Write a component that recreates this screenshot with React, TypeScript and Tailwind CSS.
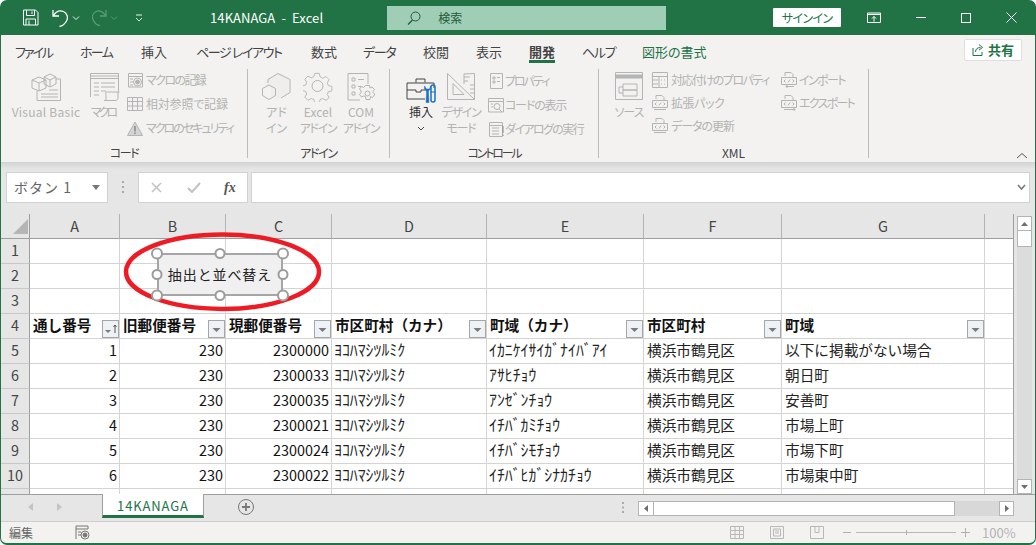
import React from "react";

const G = "#b4b4b4";
const ui = "font-['Noto_Sans_CJK_JP',sans-serif] [font-feature-settings:'palt']";

function Ic({ w, h, children, className = "" }: { w: number; h: number; children: React.ReactNode; className?: string }) {
  return (
    <svg width={w} height={h} viewBox={`0 0 ${w} ${h}`} fill="none" stroke={G} strokeWidth="1" className={`shrink-0 ${className}`}>
      {children}
    </svg>
  );
}

const VB = () => (
  <Ic w={31} h={30}>
    <path d="M1 8l7-3 7 3v8l-7 3-7-3zM1 8l7 3 7-3M8 11v8" />
    <path d="M13 5l6-3 6 3v7l-6 3-6-3zM13 5l6 3 6-3M19 8v7" />
    <path d="M25 7h4.500v21.500H6V19M10 22h17M10 25h17M18 18h9" />
  </Ic>
);
const Macro = () => (
  <Ic w={31} h={30} className="ml-[3px]">
    <path d="M1.500 25V1.500h28V19M1.500 6.500h28M1.500 1.500h28V4h-28z" />
    <path d="M5 11h5M12 11h14M5 15h5M12 15h14M5 19h5M12 19h5M5 23h5" />
    <path d="M17 28.500h9c2 0 3-1 3-3V20h1.500M17 20h13M17 20c-1 1 0 2 0 3v4c0 1-1 1.500-2 1.500h2" />
  </Ic>
);
const RecIc = () => (
  <Ic w={16} h={16}>
    <path d="M1.500 15V1.500h14V15zM1.500 4.500h14M3 7h3M3 10h3M3 13h3" />
    <circle cx="10.500" cy="10" r="4" fill="#f3f2f1" />
    <circle cx="10.500" cy="10" r="2" fill={G} />
  </Ic>
);
const GridIc = () => (
  <Ic w={16} h={14}>
    <path d="M.5.500h15v13H.5zM5.500.500v13M10.500.500v13M.5 4.500h15M.5 9h15" />
  </Ic>
);
const WarnIc = () => (
  <Ic w={16} h={15}>
    <path d="M8 1l7.500 13.500H.5z" fill="#d4d4d4" />
    <path d="M8 5v5.500M8 11.500v1.500" stroke="#888" strokeWidth="1.500" />
  </Ic>
);
const Hex = () => (
  <Ic w={29} h={30}>
    <path d="M15 1l11.500 6.500v13L15 27 9 24V16l-6-2V7.500z" fill="#efeeed" stroke="none" />
    <path d="M6 11V7.500L16 1.500l12 6v13L19 26" />
    <path d="M7 13l6.500 3.500v7L7 27.500.5 23.500v-7z" />
  </Ic>
);
const Gear = () => (
  <Ic w={30} h={30}>
    <path d="M12.500 1.500h5l1 4 3 1.500 3.500-2 3.500 3.500-2 3.500 1 3 4 1v5l-4 1-1 3 2 3.500-3.500 3-3.500-2-3 1-1 4h-5l-1-4-3-1-3.500 2-3.500-3.500 2-3.500-1-3-4-1v-5l4-1 1-3-2-3.500 3.500-3.500 3.500 2 3-1.500z" transform="translate(0.500 0) scale(.9)" />
    <circle cx="14.500" cy="14" r="5.500" />
  </Ic>
);
const Com = () => (
  <Ic w={28} h={30}>
    <path d="M21 12V1.500H1V28h12" />
    <path d="M5 6h3v3H5zM5 13h3v3H5zM5 20h3v3H5zM11 7.500h6M11 14.500h3" />
    <circle cx="20.500" cy="21.500" r="2.500" />
    <path d="M18.500 13.500h4l.5 2.500 2-1 2.500 2.500-1.500 2 0 1 1.500 1.500v1l-2 2.500-2-1-.5 3h-4l-.5-3-2-.5-2 1-2-2.500 1.500-2v-1.500l-1.500-2 2-2.500 2 1z" />
  </Ic>
);
const Toolbox = () => (
  <svg width="31" height="28" viewBox="0 0 31 28" fill="none" className="shrink-0">
    <path d="M1 23V7h27v5M1 23h18M1 14h9v2h5v-2h5M10 6.500V3h9v3.500" stroke="#444" />
    <path d="M19 10v3l2 2v3l-.5 8.500h3L23 18v-3l2-2v-3l-1 3h-3z" fill="#1b70c4" stroke="#1b70c4" strokeWidth=".5" transform="translate(-.5 0)" />
    <path d="M27 9c1 0 2 1 2 2v13c0 1-1 2-2 2s-2-1-2-2V11c0-1 1-2 2-2z" stroke="#1b70c4" strokeWidth="1.500" />
    <path d="M24.500 16h5" stroke="#1b70c4" />
  </svg>
);
const Ruler = () => (
  <Ic w={30} h={30}>
    <path d="M1.500 1.500v26h27zM7 11.500v11h11z" />
    <path d="M18 12V2l10.500-.5V27M18 5h6M18 9h4M24 13h4M24 17h4M24 21h4" />
  </Ic>
);
const Prop = () => (
  <Ic w={13} h={16}>
    <path d="M.5.500h12v15H.5zM3 4h2v2H3zM3 8h2v2H3zM7 4.500h3M7 8.500h3" />
  </Ic>
);
const Code = () => (
  <Ic w={16} h={15}>
    <path d="M.5 14V.5h15V14zM.5 3.500h15" />
    <circle cx="9" cy="8.500" r="3" />
    <path d="M11 11l3 3M3 6h2M3 9h2" />
  </Ic>
);
const Dlg = () => (
  <Ic w={15} h={15}>
    <path d="M.5.500h13v14H.5zM.5 3.500h13M3 6h7M3 9h7M3 12h7" />
    <path d="M14 4v7M14 12.500v1.500" stroke="#888" />
  </Ic>
);
const Source = () => (
  <Ic w={29} h={29}>
    <path d="M.5.500h27v27H.5z" />
    <path d="M1 4.500h26" strokeWidth="4" />
    <path d="M8 12h14v6H8zM8 18h14v6H8zM4 15h4M4 15v6h4" />
  </Ic>
);
const MapIc = () => (
  <Ic w={16} h={16}>
    <path d="M.5.500h15v15H.5zM.5 4.500h15M7 4.500v11M.5 8h6M.5 12h6M9 8h1M12 8h1M9 12h1M12 12h1" />
  </Ic>
);
const Xml = ({ arrow = "" }: { arrow?: string }) => (
  <Ic w={16} h={16}>
    <path d="M4 4V.5h6l2 2V5M.5 5.500h15v7H.5z" />
    <path d="M4.500 7.500L3 9l1.500 1.500M11.500 7.500L13 9l-1.500 1.500M7 10.500l2-3" />
    <path d={arrow || "M2 14.500h12"} />
  </Ic>
);

function Large({ cls, icon, lines }: { cls: string; icon: React.ReactNode; lines: [string, string][] }) {
  return (
    <div className={`flex flex-col items-center pt-[4px] shrink-0 ${cls}`}>
      <div className="h-[32px] flex items-start justify-center">{icon}</div>
      {lines.map(([l, c]) => (
        <div key={l} className={`h-[16px] leading-[16px] text-[12px] whitespace-nowrap text-[#b2b2b2] ${c}`}>{l}</div>
      ))}
    </div>
  );
}

function Small({ icon, label, tr, h = "h-[24px]", gap = "gap-[3px]" }: { icon: React.ReactNode; label: string; tr: string; h?: string; gap?: string }) {
  return (
    <div className={`flex items-center whitespace-nowrap text-[12px] text-[#b2b2b2] ${h} ${gap}`}>
      <div className="w-[16px] flex justify-center">{icon}</div>
      <span className={tr}>{label}</span>
    </div>
  );
}

function Group({ cls, label, tr = "", children }: { cls: string; label: string; tr?: string; children: React.ReactNode }) {
  return (
    <div className={`flex flex-col h-[93px] shrink-0 ${cls}`}>
      <div className="flex flex-1 min-h-0">{children}</div>
      <div className={`h-[16px] leading-[16px] text-center text-[12px] text-[#444444] ${tr}`}>{label}</div>
    </div>
  );
}
const Sep = () => <div className="w-px h-[89px] mt-px bg-[#bdbcbb] shrink-0" />;

const Tab = ({ children, cls }: { children: React.ReactNode; cls: string }) => (
  <div className={`text-[13px] leading-[33px] whitespace-nowrap text-[#444444] ${cls}`}>{children}</div>
);

const hira = "font-['Noto_Sans_CJK_JP',sans-serif]";
const num = "font-['Noto_Sans_CJK_JP',sans-serif] text-[14.4px] text-[#111111] flex items-center justify-end pr-[2px] pb-[2px]";
const line = "border-r border-b border-[#d4d4d4]";

const rows = [
  ["5", "1", "230", "2300000", "ﾖｺﾊﾏｼﾂﾙﾐｸ", "ｲｶﾆｹｲｻｲｶﾞﾅｲﾊﾞｱｲ", "横浜市鶴見区", "以下に掲載がない場合"],
  ["6", "2", "230", "2300033", "ﾖｺﾊﾏｼﾂﾙﾐｸ", "ｱｻﾋﾁｮｳ", "横浜市鶴見区", "朝日町"],
  ["7", "3", "230", "2300035", "ﾖｺﾊﾏｼﾂﾙﾐｸ", "ｱﾝｾﾞﾝﾁｮｳ", "横浜市鶴見区", "安善町"],
  ["8", "4", "230", "2300021", "ﾖｺﾊﾏｼﾂﾙﾐｸ", "ｲﾁﾊﾞｶﾐﾁｮｳ", "横浜市鶴見区", "市場上町"],
  ["9", "5", "230", "2300024", "ﾖｺﾊﾏｼﾂﾙﾐｸ", "ｲﾁﾊﾞｼﾓﾁｮｳ", "横浜市鶴見区", "市場下町"],
  ["10", "6", "230", "2300022", "ﾖｺﾊﾏｼﾂﾙﾐｸ", "ｲﾁﾊﾞﾋｶﾞｼﾅｶﾁｮｳ", "横浜市鶴見区", "市場東中町"],
];

const heads = [
  { t: "通し番号", sort: true },
  { t: "旧郵便番号" },
  { t: "現郵便番号" },
  { t: "市区町村（カナ）" },
  { t: "町域（カナ）" },
  { t: "市区町村" },
  { t: "町域" },
];

const RowH = ({ n }: { n: string }) => (
  <div className={`${hira} bg-[#e6e6e6] border-r border-r-[#9e9e9e] border-b border-b-[#c8c8c8] text-[14.4px] text-[#444444] flex items-center justify-center pb-[2px]`}>{n}</div>
);

const Filter = ({ sort }: { sort?: boolean }) => (
  <div className="w-[17px] h-[18px] shrink-0 self-end border border-[#a6a6a6] bg-[#eef1f5] flex items-center justify-center">
    <svg width="15" height="14" viewBox="0 0 15 14">
      <path d={sort ? "M2 8h6l-3 3z" : "M3.500 6h8l-4 4z"} fill="#7a7a7a" />
      {sort && <path d="M12 11V3M10.500 5L12 3l1.500 2" stroke="#555" fill="none" />}
    </svg>
  </div>
);

export default function App() {
  return (
    <div className="w-[1036px] h-[545px] bg-white">
      <div className={`w-[1036px] h-[545px] overflow-hidden rounded-[7px] bg-[#217346] flex flex-col px-px pb-[2px] ${ui}`}>
        {/* title bar */}
        <div className="h-[35px] flex items-center shrink-0 text-white relative">
          <svg width="17" height="17" viewBox="0 0 17 17" fill="none" stroke="#fff" className="ml-[21px]">
            <path d="M1.500 1h12l2.500 2.500V16H1.500zM4.500 1v5.500h8V1M4 16v-6h9.500v6M10 2.500v2.500M7 11.500v4.500" />
          </svg>
          <svg width="18" height="19" viewBox="0 0 18 19" fill="none" stroke="#fff" strokeWidth="1.300" className="ml-[13px]">
            <path d="M1 2v6h6M1.500 7.500C4 3.500 8 2 11.500 3.500s5 6 3 9.500S10 18 7.500 18.500" />
          </svg>
          <svg width="8" height="6" viewBox="0 0 8 6" fill="none" stroke="#e8f2ec" className="ml-[2px]"><path d="M1 1.500l3 3 3-3" /></svg>
          <svg width="16" height="17" viewBox="0 0 16 17" fill="none" stroke="#5c9b78" strokeWidth="1.300" className="ml-[11px]">
            <path d="M15 1v6H9M14.500 6.500C12 2.500 8 1 5 2.500s-4.500 5-2.500 9 5 5 6.500 5" />
          </svg>
          <svg width="8" height="6" viewBox="0 0 8 6" fill="none" stroke="#5c9b78" className="ml-[3px]"><path d="M1 1.500l3 3 3-3" /></svg>
          <svg width="8" height="8" viewBox="0 0 8 8" fill="none" stroke="#e8f2ec" className="ml-[17px]"><path d="M1 1h6M1 4l3 3 3-3" /></svg>
          <div className="ml-[67px] text-[13px] tracking-[.1px] whitespace-pre">14KANAGA  -  Excel</div>
          <div className="ml-[64px] w-[279px] h-[24px] bg-[#a0cdb5] flex items-center text-[#1c5c3a] text-[12px]">
            <svg width="14" height="14" viewBox="0 0 14 14" fill="none" stroke="#1c5c3a" className="ml-[20px]">
              <circle cx="8.500" cy="5.500" r="4.500" /><path d="M5.500 9L1 13.500" strokeWidth="1.300" />
            </svg>
            <span className="ml-[17px]">検索</span>
          </div>
          <div className="ml-[107px] w-[68px] h-[19px] bg-white rounded-[1px] text-[#217346] text-[12px] tracking-[-.6px] leading-[19px] text-center">サインイン</div>
          <svg width="14" height="11" viewBox="0 0 14 11" fill="none" stroke="#fff" className="ml-[26px]">
            <path d="M.5 1h13v9.500H.5zM.5 2.500h13M7 9.500V4.500M5 6.500l2-2 2 2" />
          </svg>
          <div className="ml-[35px] w-[10px] h-px bg-white" />
          <div className="ml-[35px] w-[10px] h-[10px] border border-white" />
          <svg width="11" height="11" viewBox="0 0 11 11" stroke="#fff" className="ml-[35px]"><path d="M.5.500l10 10M10.500.500l-10 10" /></svg>
        </div>

        {/* ribbon */}
        <div className="bg-[#f3f2f1] shrink-0">
          <div className="h-[33px] flex relative">
            <Tab cls="ml-[14px] w-[37px] tracking-[-2px]">ファイル</Tab>
            <Tab cls="ml-[28px] w-[33px] tracking-[-1.7px]">ホーム</Tab>
            <Tab cls="ml-[28px] w-[25px]">挿入</Tab>
            <Tab cls="ml-[30px] w-[86px] tracking-[-1.4px]">ページ レイアウト</Tab>
            <Tab cls="ml-[29px] w-[26px]">数式</Tab>
            <Tab cls="ml-[26px] w-[32px] tracking-[-1.3px]">データ</Tab>
            <Tab cls="ml-[28px] w-[25px]">校閲</Tab>
            <Tab cls="ml-[28px] w-[26px]">表示</Tab>
            <div className="ml-[27px] w-[26px] relative">
              <div className="text-[13px] leading-[33px] font-bold text-[#444444] whitespace-nowrap">開発</div>
              <div className="absolute left-0 right-0 top-[25px] h-[3px] bg-[#217346]" />
            </div>
            <Tab cls="ml-[27px] w-[32px] tracking-[-1.3px]">ヘルプ</Tab>
            <Tab cls="ml-[28px] w-[63px] !text-[#217346]">図形の書式</Tab>
            <div className="ml-[259px] mt-[4px] w-[58px] h-[22px] shrink-0 bg-white border border-[#e1dfdd] rounded-[2px] flex items-center justify-center gap-[4px]">
              <svg width="12" height="12" viewBox="0 0 12 12" fill="none" stroke="#217346"><path d="M1 4v7.500h9V8M3.500 8c0-3 2-4.500 5-4.500M7 .5l3.500 3L7 6" /></svg>
              <span className="text-[13px] font-bold text-[#217346] whitespace-nowrap">共有</span>
            </div>
          </div>
          <div className="h-[94px] flex">
            <Group cls="w-[246px]" label="コード" tr="tracking-[-1.500px]">
              <Large cls="w-[70px] ml-[10px]" icon={<VB />} lines={[["Visual Basic", "tracking-[.25px]"]]} />
              <Large cls="w-[32px] ml-[6px]" icon={<Macro />} lines={[["マクロ", "tracking-[-3px]"]]} />
              <div className="ml-[8px] shrink-0">
                <Small icon={<RecIc />} label="マクロの記録" tr="tracking-[-1.600px]" />
                <Small icon={<GridIc />} label="相対参照で記録" tr="tracking-[-.2px]" />
                <Small icon={<WarnIc />} label="マクロのセキュリティ" tr="tracking-[-2px]" />
              </div>
            </Group>
            <Sep />
            <Group cls="w-[141px]" label="アドイン" tr="tracking-[-1.300px]">
              <Large cls="w-[29px] ml-[14px]" icon={<Hex />} lines={[["アド", ""], ["イン", ""]]} />
              <Large cls="w-[36px] ml-[9px]" icon={<Gear />} lines={[["Excel", ""], ["アドイン", "tracking-[-1.300px]"]]} />
              <Large cls="w-[36px] ml-[7px]" icon={<Com />} lines={[["COM", ""], ["アドイン", "tracking-[-1.300px]"]]} />
            </Group>
            <Sep />
            <Group cls="w-[208px]" label="コントロール" tr="tracking-[-2.200px]">
              <div className="ml-[15px] w-[32px] shrink-0 flex flex-col items-center pt-[8px]">
                <div className="h-[28px]"><Toolbox /></div>
                <div className="h-[16px] leading-[16px] text-[12px] text-[#333333] whitespace-nowrap">挿入</div>
                <svg width="8" height="6" viewBox="0 0 8 6" fill="none" stroke="#444" className="mt-[6px]"><path d="M1 1l3 3 3-3" /></svg>
              </div>
              <Large cls="w-[40px] ml-[4px]" icon={<Ruler />} lines={[["デザイン", "tracking-[-1.200px]"], ["モード", "tracking-[-1.200px]"]]} />
              <div className="ml-[7px] pt-px shrink-0">
                <Small gap="gap-[1px]" icon={<Prop />} label="プロパティ" tr="tracking-[-2px]" />
                <Small gap="gap-[1px]" icon={<Code />} label="コードの表示" tr="tracking-[-1.200px]" />
                <Small gap="gap-[1px]" icon={<Dlg />} label="ダイアログの実行" tr="tracking-[-1.600px]" />
              </div>
            </Group>
            <Sep />
            <Group cls="w-[269px]" label="XML">
              <Large cls="w-[30px] ml-[15px]" icon={<Source />} lines={[["ソース", "tracking-[-1px]"]]} />
              <div className="ml-[8px] w-[120px] shrink-0">
                <Small h="h-[23px]" icon={<MapIc />} label="対応付けのプロパティ" tr="tracking-[-1.500px]" />
                <Small h="h-[23px]" icon={<Xml />} label="拡張パック" tr="tracking-[-.4px]" />
                <Small h="h-[23px]" icon={<Xml />} label="データの更新" tr="tracking-[-1px]" />
              </div>
              <div className="ml-[9px] shrink-0">
                <Small h="h-[23px]" gap="gap-[2px]" icon={<Xml arrow="M13 14.500H5M7 12.500l-2 2 2 2" />} label="インポート" tr="tracking-[-1.600px]" />
                <Small h="h-[23px]" gap="gap-[2px]" icon={<Xml arrow="M3 14.500h11M12 12.500l2 2-2 2" />} label="エクスポート" tr="tracking-[-1.700px]" />
              </div>
            </Group>
            <Sep />
            <svg width="12" height="7" viewBox="0 0 12 7" fill="none" stroke="#555" className="ml-[147px] mt-[84px]"><path d="M1 6l5-4.500L11 6" /></svg>
          </div>
        </div>

        {/* formula bar */}
        <div className="h-[52px] shrink-0 bg-[#e6e6e6] flex flex-col">
          <div className="h-[7px] shrink-0 bg-gradient-to-b from-[#d2d2d2] to-[#e6e6e6]" />
          <div className="flex mt-[3px] h-[31px]">
            <div className="ml-[5px] w-[102px] bg-white border border-[#d2d2d2] flex items-center justify-between pl-[7px] pr-[7px] text-[14px] text-[#666666] tracking-[1px]">
              <span className="[font-feature-settings:normal] whitespace-pre">ボタン 1</span>
              <svg width="8" height="5" viewBox="0 0 8 5"><path d="M0 0h8L4 5z" fill="#777" /></svg>
            </div>
            <svg width="3" height="12" viewBox="0 0 3 12" fill="#aaa" className="ml-[14px] mt-[9px]"><rect y="0" width="2" height="2" /><rect y="5" width="2" height="2" /><rect y="10" width="2" height="2" /></svg>
            <div className="ml-[13px] w-[110px] bg-white border border-[#d2d2d2] flex items-center text-[#666666]">
              <svg width="11" height="11" viewBox="0 0 11 11" stroke="#c2c2c2" strokeWidth="1.500" className="ml-[12px]"><path d="M1 1l9 9M10 1l-9 9" /></svg>
              <svg width="14" height="11" viewBox="0 0 14 11" fill="none" stroke="#c2c2c2" strokeWidth="2" className="ml-[25px]"><path d="M1 6l4 4 8-9" /></svg>
              <i className="ml-[23px] text-[14px] font-bold font-['Liberation_Serif',serif] text-[#555555]">fx</i>
            </div>
            <div className="ml-[3px] w-[779px] bg-white border border-[#d2d2d2] flex items-center justify-end pr-[3px]">
              <svg width="9" height="7" viewBox="0 0 9 7" fill="none" stroke="#777" strokeWidth="1.500"><path d="M1 1l3.500 4L8 1" /></svg>
            </div>
          </div>
        </div>

        {/* sheet */}
        <div className="h-[280px] shrink-0 flex bg-[#e6e6e6]">
          <div className="w-[1013px] h-[280px] relative overflow-hidden border-r border-[#9e9e9e] bg-white">
            <div className={`grid grid-cols-[29px_90px_106px_106px_155px_157px_138px_203px_28px] auto-rows-[25px] ${hira} [font-feature-settings:normal]`}>
              <div className="bg-[#e6e6e6] border-r border-b border-[#9e9e9e] relative">
                <svg width="17" height="17" viewBox="0 0 17 17" className="absolute right-0 bottom-[3px]"><path d="M16 1v15H1z" fill="#b5b5b5" /></svg>
              </div>
              {["A", "B", "C", "D", "E", "F", "G"].map((c) => (
                <div key={c} className="bg-[#e6e6e6] border-r border-r-[#b4b4b4] border-b border-b-[#9e9e9e] text-[14.4px] text-[#444444] flex items-center justify-center">{c}</div>
              ))}
              <div className="bg-[#e6e6e6] border-b border-[#9e9e9e]" />

              {["1", "2", "3"].map((n) => (
                <React.Fragment key={n}>
                  <RowH n={n} />
                  {[0, 1, 2, 3, 4, 5, 6].map((i) => <div key={i} className={line} />)}
                  <div className="border-b border-[#d4d4d4]" />
                </React.Fragment>
              ))}

              <RowH n="4" />
              {heads.map((h) => (
                <div key={h.t} className={`${line} flex items-center justify-between pl-[3px] text-[14.6px] font-bold text-[#111111] whitespace-nowrap`}>
                  <span className="-mt-[2px]">{h.t}</span>
                  <Filter sort={h.sort} />
                </div>
              ))}
              <div className="border-b border-[#d4d4d4]" />

              {rows.map((r, i) => (
                <React.Fragment key={i}>
                  <RowH n={r[0]} />
                  <div className={`${line} ${num}`}>{r[1]}</div>
                  <div className={`${line} ${num}`}>{r[2]}</div>
                  <div className={`${line} ${num}`}>{r[3]}</div>
                  <div className={`${line} flex items-center pl-[2px] pb-[2px] text-[15.8px] text-[#222222] whitespace-nowrap overflow-hidden`}>{r[4]}</div>
                  <div className={`${line} flex items-center pl-[2px] pb-[2px] text-[15.8px] text-[#222222] whitespace-nowrap overflow-hidden`}>{r[5]}</div>
                  <div className={`${line} flex items-center pl-[3px] pb-[2px] text-[14.67px] text-[#222222] whitespace-nowrap`}>{r[6]}</div>
                  <div className={`${line} flex items-center pl-[3px] pb-[2px] text-[14.67px] text-[#222222] whitespace-nowrap`}>{r[7]}</div>
                  <div className="border-b border-[#d4d4d4]" />
                </React.Fragment>
              ))}
              <div className="bg-[#e6e6e6] border-r border-r-[#9e9e9e]" />
              <div className="border-r border-[#d4d4d4]" />
              <div className="border-r border-[#d4d4d4]" />
              <div className="border-r border-[#d4d4d4]" />
              <div className="border-r border-[#d4d4d4]" />
              <div className="border-r border-[#d4d4d4]" />
              <div className="border-r border-[#d4d4d4] pl-[3px] pt-[4px] text-[14.67px] text-[#222222] whitespace-nowrap overflow-hidden">横浜市鶴見区</div>
              <div className="border-r border-[#d4d4d4]" />
              <div />
            </div>

            {/* drawing layer */}
            <div className="absolute left-[156px] top-[39px] w-[126px] h-[43px] bg-[#f0f0f0] border-2 border-[#a6a6a6] flex items-center justify-center text-[14px] text-[#222222] tracking-[.9px] [font-feature-settings:normal] whitespace-nowrap">抽出と並べ替え</div>
            <svg width="1036" height="545" viewBox="0 0 1036 545" fill="none" className="absolute left-[-1px] top-[-214px] pointer-events-none">
              <ellipse cx="222.500" cy="271.700" rx="96.500" ry="37.200" stroke="#ed1c24" strokeWidth="4.500" />
              {[[157, 253.500], [220, 253.500], [283, 253.500], [157, 274.500], [283, 274.500], [157, 295.500], [220, 295.500], [283, 295.500]].map(([x, y], i) => (
                <circle key={i} cx={x} cy={y} r={i === 1 || i === 3 || i === 4 || i === 6 ? 4.500 : 5} fill="#fff" stroke="#9c9c9c" strokeWidth="2" />
              ))}
            </svg>
          </div>
          <div className="w-[21px] flex flex-col pl-[3px] pr-[3px] pt-[2px] bg-[#e6e6e6]">
            <div className="w-[15px] flex-1 flex flex-col bg-[#dcdcdc]">
              <div className="h-[15px] bg-white border border-[#b4b4b4] flex items-center justify-center">
                <svg width="7" height="4" viewBox="0 0 7 4"><path d="M0 4h7L3.500 0z" fill="#6e6e6e" /></svg>
              </div>
              <div className="h-[16px] bg-white border border-t-0 border-[#b4b4b4]" />
              <div className="flex-1" />
              <div className="h-[15px] bg-white border border-[#b4b4b4] flex items-center justify-center">
                <svg width="7" height="4" viewBox="0 0 7 4"><path d="M0 0h7L3.500 4z" fill="#6e6e6e" /></svg>
              </div>
            </div>
          </div>
        </div>

        {/* sheet tabs */}
        <div className="h-[28px] shrink-0 bg-[#e6e6e6] flex items-start border-b border-[#cfcfcf] relative">
          <div className="absolute left-0 right-0 top-0 h-px bg-[#9e9e9e]" />
          <svg width="5" height="8" viewBox="0 0 5 8" fill="#c4c4c4" className="ml-[27px] mt-[9px]"><path d="M5 0v8L0 4z" /></svg>
          <svg width="5" height="8" viewBox="0 0 5 8" fill="#c4c4c4" className="ml-[24px] mt-[9px]"><path d="M0 0v8l5-4z" /></svg>
          <div className="ml-[40px] w-[102px] h-[24px] relative bg-white border-x border-[#9e9e9e] border-b-[3px] border-b-[#217346] text-[13px] tracking-[.9px] leading-[23px] text-center text-[#217346] [font-feature-settings:normal]">14KANAGA</div>
          <svg width="16" height="16" viewBox="0 0 16 16" fill="none" stroke="#777" className="ml-[34px] mt-[5px]">
            <circle cx="8" cy="8" r="7.500" strokeWidth="1" /><path d="M8 4v8M4 8h8" strokeWidth="1.800" />
          </svg>
          <svg width="3" height="11" viewBox="0 0 3 11" fill="#aaa" className="ml-[368px] mt-[8px]"><rect y="0" width="2" height="2" /><rect y="4.500" width="2" height="2" /><rect y="9" width="2" height="2" /></svg>
          <div className="ml-[13px] mt-[7px] w-[376px] h-[15px] bg-[#d8d8d8] flex">
            <div className="w-[16px] h-[15px] bg-white border border-[#b4b4b4] flex items-center justify-center">
              <svg width="4" height="7" viewBox="0 0 4 7"><path d="M4 0v7L0 3.500z" fill="#6e6e6e" /></svg>
            </div>
            <div className="w-[301px] h-[15px] bg-white border border-l-0 border-[#b4b4b4]" />
            <div className="flex-1" />
            <div className="w-[15px] h-[15px] bg-white border border-[#b4b4b4] flex items-center justify-center">
              <svg width="4" height="7" viewBox="0 0 4 7"><path d="M0 0v7l4-3.500z" fill="#6e6e6e" /></svg>
            </div>
          </div>
        </div>

        {/* status bar */}
        <div className="flex-1 bg-[#f3f2f1] flex items-center text-[12px] text-[#666666] rounded-b-[5px]">
          <span className="ml-[8px]">編集</span>
          <svg width="15" height="15" viewBox="0 0 15 15" fill="none" stroke="#777" className="ml-[42px]">
            <path d="M1 14V1h12v3M1 4h12M3 7h3M3 10h3" /><circle cx="10" cy="10" r="4" fill="#f3f2f1" /><circle cx="10" cy="10" r="2" fill="#777" />
          </svg>
          <svg width="14" height="13" viewBox="0 0 14 13" fill="none" stroke="#b8b8b8" className="ml-[640px]"><path d="M.5.500h13v12H.5zM5 .5v12M9.500.5v12M.5 4.500h13M.5 8.500h13" /></svg>
          <svg width="14" height="13" viewBox="0 0 14 13" fill="none" stroke="#b8b8b8" className="ml-[26px]"><path d="M.5.500h13v12H.5zM3.500 3h7v7h-7zM5 5h4M5 7h4" /></svg>
          <svg width="14" height="13" viewBox="0 0 14 13" fill="none" stroke="#b8b8b8" className="ml-[26px]"><path d="M.5.500h13v12H.5zM5 .5v6h4V.5" /></svg>
          <div className="ml-[19px] w-[8px] h-px bg-[#b0b0b0]" />
          <div className="ml-[5px] w-[100px] h-px bg-[#b8b8b8] relative">
            <div className="absolute left-[50px] top-[-2px] w-px h-[5px] bg-[#b0b0b0]" />
          </div>
          <svg width="9" height="9" viewBox="0 0 9 9" stroke="#b0b0b0" className="ml-[5px]"><path d="M4.500 0v9M0 4.500h9" /></svg>
          <span className="ml-[12px] text-[13px] text-[#b4b4b4] [font-feature-settings:normal]">100%</span>
        </div>
      </div>
    </div>
  );
}
